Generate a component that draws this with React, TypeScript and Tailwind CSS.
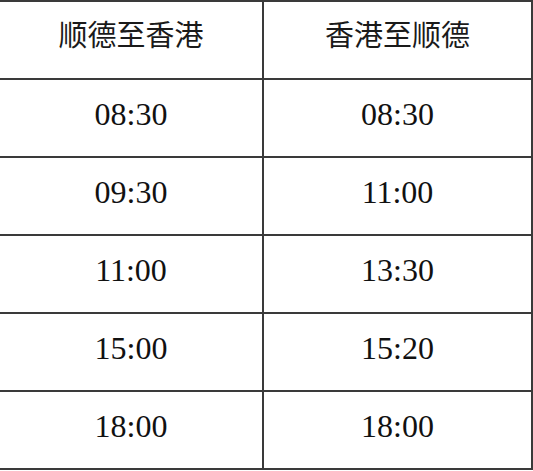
import { Fragment } from "react";

const rows = [
  ["08:30", "08:30"],
  ["09:30", "11:00"],
  ["11:00", "13:30"],
  ["15:00", "15:20"],
  ["18:00", "18:00"],
];

export default function App() {
  return (
    <div className="w-[533px] h-[471px] bg-white overflow-hidden">
      <div className="w-[533px] border-t-2 border-r-2 border-[#3a3a3a] grid grid-cols-[264px_1fr]">
        {/* header */}
        <div className="h-[78px] border-b-2 border-r-2 border-[#3a3a3a] flex items-center justify-center pb-3 text-[29px] text-[#1a1a1a] font-['Noto_Sans_CJK_SC',sans-serif] font-normal">
          顺德至香港
        </div>
        <div className="h-[78px] border-b-2 border-[#3a3a3a] flex items-center justify-center pb-3 text-[29px] text-[#1a1a1a] font-['Noto_Sans_CJK_SC',sans-serif] font-normal">
          香港至顺德
        </div>

        {rows.map(([a, b], i) => (
          <Fragment key={i}>
            <div className="h-[78px] border-b-2 border-r-2 border-[#3a3a3a] flex items-center justify-center pb-2 text-[32px] text-[#111] font-['Liberation_Serif',serif]">
              {a}
            </div>
            <div className="h-[78px] border-b-2 border-[#3a3a3a] flex items-center justify-center pb-2 text-[32px] text-[#111] font-['Liberation_Serif',serif]">
              {b}
            </div>
          </Fragment>
        ))}
      </div>
    </div>
  );
}
